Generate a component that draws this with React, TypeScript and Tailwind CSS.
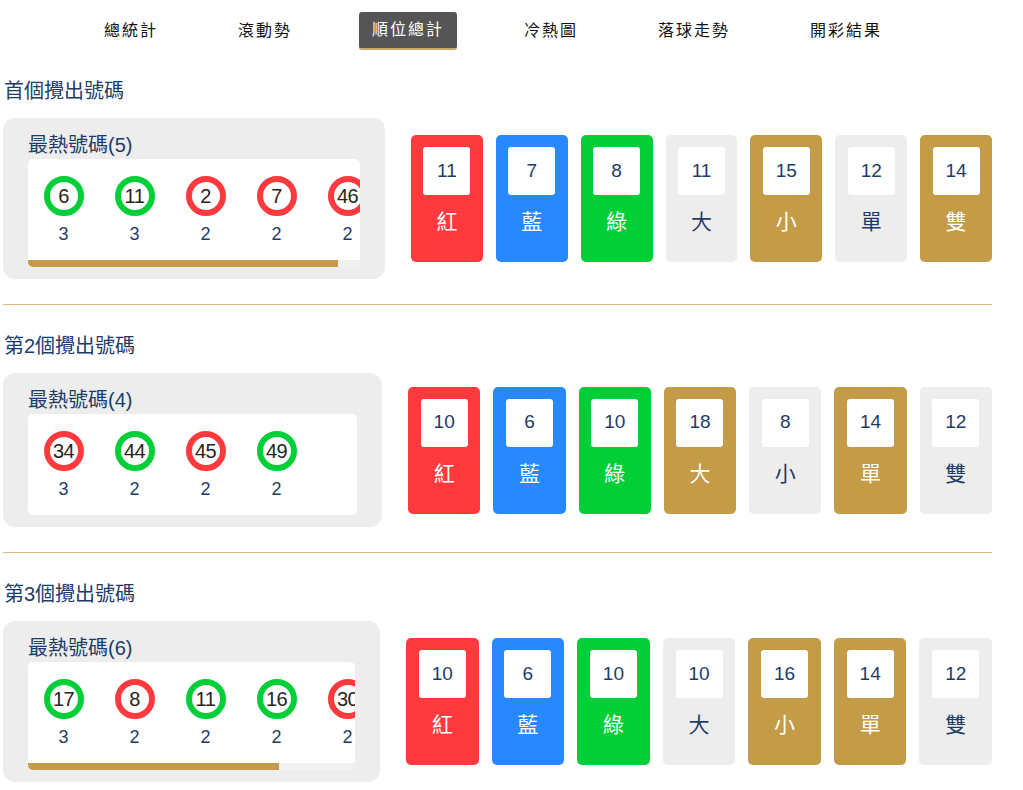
import React from 'react';

type Ball = { n: number; c: 'red' | 'green'; count: number };
type Stat = { label: string; value: number; tone: 'red' | 'blue' | 'green' | 'gold' | 'gray' };
type Section = { title: string; cardW: number; total: number; balls: Ball[]; stats: Stat[] };

const navItems = ['總統計', '滾動勢', '順位總計', '冷熱圖', '落球走勢', '開彩結果'];

const sections: Section[] = [
  {
    title: '首個攪出號碼',
    cardW: 382,
    total: 5,
    balls: [
      { n: 6, c: 'green', count: 3 },
      { n: 11, c: 'green', count: 3 },
      { n: 2, c: 'red', count: 2 },
      { n: 7, c: 'red', count: 2 },
      { n: 46, c: 'red', count: 2 },
    ],
    stats: [
      { label: '紅', value: 11, tone: 'red' },
      { label: '藍', value: 7, tone: 'blue' },
      { label: '綠', value: 8, tone: 'green' },
      { label: '大', value: 11, tone: 'gray' },
      { label: '小', value: 15, tone: 'gold' },
      { label: '單', value: 12, tone: 'gray' },
      { label: '雙', value: 14, tone: 'gold' },
    ],
  },
  {
    title: '第2個攪出號碼',
    cardW: 379,
    total: 4,
    balls: [
      { n: 34, c: 'red', count: 3 },
      { n: 44, c: 'green', count: 2 },
      { n: 45, c: 'red', count: 2 },
      { n: 49, c: 'green', count: 2 },
    ],
    stats: [
      { label: '紅', value: 10, tone: 'red' },
      { label: '藍', value: 6, tone: 'blue' },
      { label: '綠', value: 10, tone: 'green' },
      { label: '大', value: 18, tone: 'gold' },
      { label: '小', value: 8, tone: 'gray' },
      { label: '單', value: 14, tone: 'gold' },
      { label: '雙', value: 12, tone: 'gray' },
    ],
  },
  {
    title: '第3個攪出號碼',
    cardW: 377,
    total: 6,
    // only the visible part of the scroll strip is rendered
    balls: [
      { n: 17, c: 'green', count: 3 },
      { n: 8, c: 'red', count: 2 },
      { n: 11, c: 'green', count: 2 },
      { n: 16, c: 'green', count: 2 },
      { n: 30, c: 'red', count: 2 },
    ],
    stats: [
      { label: '紅', value: 10, tone: 'red' },
      { label: '藍', value: 6, tone: 'blue' },
      { label: '綠', value: 10, tone: 'green' },
      { label: '大', value: 10, tone: 'gray' },
      { label: '小', value: 16, tone: 'gold' },
      { label: '單', value: 14, tone: 'gold' },
      { label: '雙', value: 12, tone: 'gray' },
    ],
  },
];

const toneClass: Record<Stat['tone'], string> = {
  red: 'bg-[#fe3a3e] text-white',
  blue: 'bg-[#2888fe] text-white',
  green: 'bg-[#02cf37] text-white',
  gold: 'bg-[#c49b47] text-white',
  gray: 'bg-[#ededed] text-[#1d3c6a]',
};

function HotNumbers({ balls, total, cardW }: { balls: Ball[]; total: number; cardW: number }) {
  const trackW = cardW - 50;
  const contentW = total * 71;
  const scrolls = contentW > trackW;
  const thumbW = Math.round((trackW * trackW) / contentW);

  return (
    <div className="shrink-0 rounded-[12px] bg-[#ededed] px-[25px] pt-[14px] pb-[12px]" style={{ width: cardW }}>
      <div className="h-[26px] text-[20px] leading-[26px] text-[#1d3c6a]">最熱號碼({total})</div>
      <div className="mt-px overflow-hidden rounded-[5px] bg-white">
        <div className="flex pt-[17px] pb-[16px]">
          {balls.map((b) => (
            <div key={b.n} className="flex w-[71px] shrink-0 flex-col items-center">
              <div
                className={`flex h-[40px] w-[40px] items-center justify-center rounded-full border-[6px] bg-white text-[20px] leading-none tracking-[-0.5px] text-[#2a2420] ${
                  b.c === 'red' ? 'border-[#fe3a3e]' : 'border-[#02cf37]'
                }`}
              >
                {b.n}
              </div>
              <div className="mt-[8px] h-[20px] text-[18px] leading-[20px] text-[#1d3c6a]">{b.count}</div>
            </div>
          ))}
        </div>
        {scrolls && (
          <div className="h-[7px] bg-[#f1f1f1]">
            <div className="h-[7px] bg-[#c49b47]" style={{ width: thumbW }} />
          </div>
        )}
      </div>
    </div>
  );
}

function StatCard({ s }: { s: Stat }) {
  return (
    <div className={`flex h-[127px] flex-1 flex-col items-center rounded-[5px] pt-[12px] ${toneClass[s.tone]}`}>
      <div className="flex h-[48px] w-[47px] items-center justify-center rounded-[3px] bg-white text-[19px] text-[#1d3c6a]">
        {s.value}
      </div>
      <div className="mt-[14px] text-[21px] leading-[26px]">{s.label}</div>
    </div>
  );
}

export default function App() {
  return (
    <div
      className="min-h-screen bg-white"
      style={{ fontFamily: '"Liberation Sans", "Noto Sans CJK TC", sans-serif' }}
    >
      <nav className="flex h-[62px] items-center gap-[54px] pl-[91px]">
        {navItems.map((item) => (
          <div
            key={item}
            className={`flex h-[38px] items-center rounded-[3px] px-[13px] text-[16px] tracking-[2px] ${
              item === '順位總計'
                ? 'border-b-2 border-[#c9a86a] bg-[#555555] text-white'
                : 'text-[#111111]'
            }`}
          >
            {item}
          </div>
        ))}
      </nav>

      <div className="ml-[3px] w-[989px] pt-[16px]">
        {sections.map((sec, i) => (
          <div key={sec.title}>
            {i > 0 && <div className="mt-[25px] mb-[28px] h-px bg-[#d9bd80]" />}
            <h2 className="h-[26px] pl-px text-[20px] leading-[26px] font-normal text-[#1d3c6a]">{sec.title}</h2>
            <div className="mt-[14px] flex items-center gap-[26px]">
              <HotNumbers balls={sec.balls} total={sec.total} cardW={sec.cardW} />
              <div className="flex flex-1 gap-[13px]">
                {sec.stats.map((s) => (
                  <StatCard key={s.label} s={s} />
                ))}
              </div>
            </div>
          </div>
        ))}
      </div>
    </div>
  );
}
